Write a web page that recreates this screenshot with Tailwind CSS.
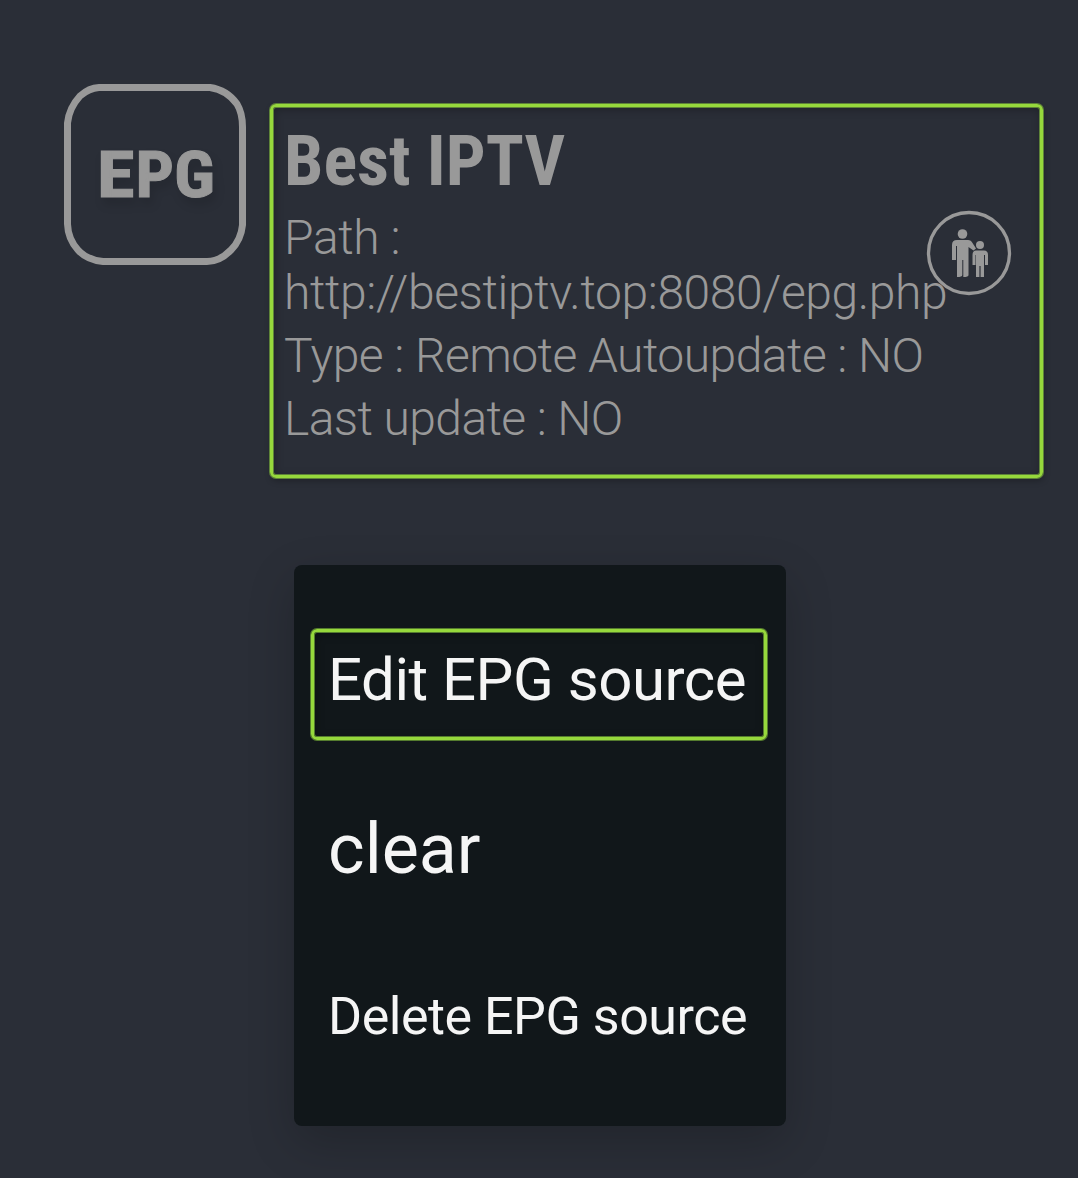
<!DOCTYPE html>
<html lang="en">
<head>
<meta charset="utf-8">
<title>EPG sources</title>
<script src="https://cdn.jsdelivr.net/npm/@tailwindcss/browser@4"></script>
</head>
<body class="h-[1178px] w-[1078px] overflow-hidden bg-[#2a2e37] font-['Roboto',sans-serif] text-[#999999]">
<main class="flex h-full flex-col items-start">
  <section class="flex items-start pt-[83px] pl-[63px]">
    <svg class="block shrink-0" width="184" height="183" viewBox="0 0 184 183">
      <path d="M36 4.500H147Q164 7 174 21Q179.500 30 179.500 44V142Q178 157 168 167Q157 178.500 144 178.500H40Q24 177 15 167Q5 156 4.500 141V40Q6 25 17 13Q26 5 36 4.500Z" fill="none" stroke="#999" stroke-width="7"/>
      <text y="114" font-family="Roboto Condensed, Roboto" font-size="65" font-weight="700" fill="#999" stroke="#999" stroke-width="1" class="drop-shadow-[3px_7px_5px_rgba(0,0,0,0.12)]"><tspan x="34" textLength="37.500" lengthAdjust="spacingAndGlyphs">E</tspan><tspan x="72.500" textLength="38.500" lengthAdjust="spacingAndGlyphs">P</tspan><tspan x="111" textLength="41" lengthAdjust="spacingAndGlyphs">G</tspan></text>
    </svg>
    <div class="relative mt-[21px] ml-[23px] h-[374px] w-[773px] rounded-[6px] border-3 border-[#96d83c] pt-[14px] pl-[11px] shadow-[0_0_0_1px_#5e8339,inset_0_0_0_1px_#5e8339,inset_1px_2px_10px_rgba(0,0,0,0.3),1px_3px_6px_rgba(0,0,0,0.25)]">
      <svg class="block overflow-visible" width="290" height="80" viewBox="0 0 290 80">
        <text x="0" y="64" font-family="Roboto Condensed, Roboto" font-size="70" font-weight="700" fill="#999" textLength="281" lengthAdjust="spacingAndGlyphs">Best IPTV</text>
      </svg>
      <p class="mt-[9px] text-[48px] leading-[55px] font-light tracking-[-0.41px] whitespace-nowrap">Path :<br>http://bestiptv.top:8080/epg.php</p>
      <p class="mt-2 text-[48px] leading-[55px] font-light tracking-[-0.54px] whitespace-nowrap">Type : Remote Autoupdate : NO</p>
      <p class="mt-2 text-[48px] leading-[55px] font-light tracking-[-0.6px] whitespace-nowrap">Last update : NO</p>
      <svg class="absolute top-[103px] left-[653px]" width="86" height="86" viewBox="0 0 86 86" fill="#999">
        <circle cx="43" cy="43" r="40.500" fill="none" stroke="#999" stroke-width="3.300"/>
        <circle cx="36.500" cy="24" r="4.800"/>
        <path d="M31 30H42Q45 30 46.500 33L50 38.500L47.500 40.500L42.500 37V65Q42.500 67 37.300 67V50H36.300V65Q36.300 67 31 67V36H30V50H26V35Q26 30 31 30Z"/>
        <circle cx="54" cy="35" r="4"/>
        <path d="M50 40.500H58Q62 40.500 62 45V55H59V45H58V67H54.600V56H53.400V67H50V45H49.500V55H46.500V45Q46.500 40.500 50 40.500Z"/>
      </svg>
    </div>
  </section>
  <nav class="mt-[87px] ml-[294px] flex h-[561px] w-[492px] flex-col items-start rounded-lg bg-[#11171a] pt-[64px] pl-[17px] text-[#f5f5f5] shadow-[0_16px_48px_rgba(0,0,0,0.2)]">
    <a class="h-[111px] w-[456px] rounded-[6px] border-3 border-[#96d83c] pt-[13px] pl-[14px] text-[60px] leading-[70px] tracking-[-0.5px] whitespace-nowrap shadow-[0_0_0_1px_#557c2e,inset_0_0_0_1px_#557c2e,inset_1px_2px_10px_rgba(0,0,0,0.35)]">Edit EPG source</a>
    <a class="mt-[69px] ml-[17px] text-[70px] leading-[80px] whitespace-nowrap">clear</a>
    <a class="mt-[98px] ml-[17px] text-[52px] leading-[60px] tracking-[-0.48px] whitespace-nowrap">Delete EPG source</a>
  </nav>
</main>
</body>
</html>
